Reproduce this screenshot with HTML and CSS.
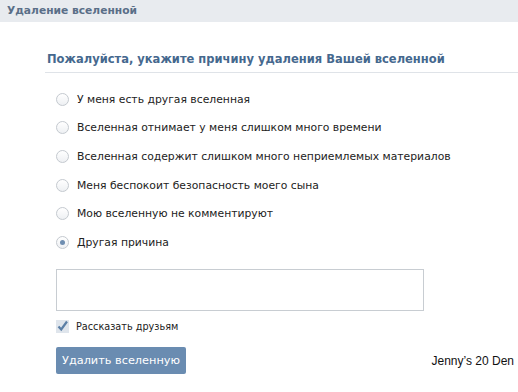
FILE: index.html
```html
<!DOCTYPE html>
<html lang="ru">
<head>
    <meta charset="UTF-8">
    <title>Удаление вселенной</title>
    <link rel="stylesheet" href="styles.css">
</head>
<body>
    <div class="header">Удаление вселенной</div>
    <div class="content">
        <h2 class="title">Пожалуйста, укажите причину удаления Вашей вселенной</h2>
        <div class="reasons">
            <div class="reason"><span class="radio"></span>У меня есть другая вселенная</div>
            <div class="reason"><span class="radio"></span>Вселенная отнимает у меня слишком много времени</div>
            <div class="reason"><span class="radio"></span>Вселенная содержит слишком много неприемлемых материалов</div>
            <div class="reason"><span class="radio"></span>Меня беспокоит безопасность моего сына</div>
            <div class="reason"><span class="radio"></span>Мою вселенную не комментируют</div>
            <div class="reason"><span class="radio on"></span>Другая причина</div>
        </div>
        <div class="other">
            <div class="textbox"></div>
            <div class="share"><span class="check">
                <svg width="13" height="13" viewBox="0 0 13 13"><path d="M2.5 6.5 L5.2 9.5 L11 1.5" fill="none" stroke="#5b7fa6" stroke-width="2.2"/></svg>
            </span>Рассказать друзьям</div>
            <div class="footer">
                <button class="btn">Удалить вселенную</button>
                <span class="sign">Jenny’s 20 Den</span>
            </div>
        </div>
    </div>
</body>
</html>
```

FILE: styles.css
```css
body {
    margin: 0;
    background: #fff;
    font-family: "DejaVu Sans", Tahoma, sans-serif;
    font-size: 10.8px;
    color: #222;
}
.header {
    height: 22px;
    line-height: 22px;
    padding-left: 7px;
    background: #e8ebef;
    color: #5a6f88;
    font-weight: bold;
    font-size: 10.7px;
}
.content {
    padding-left: 45px;
}
.title {
    margin: 30px 0 0 0;
    padding: 0 0 6px 2px;
    font-size: 11.5px;
    font-weight: bold;
    color: #45688e;
    border-bottom: 1px solid #dfe3e8;
}
.reasons {
    padding: 12px 0 0 11px;
}
.reason {
    display: flex;
    align-items: center;
    height: 28.6px;
}
.radio {
    width: 11px;
    height: 11px;
    border: 1px solid #c4c9cf;
    border-radius: 50%;
    background: linear-gradient(#fff, #eef0f3);
    margin-right: 8px;
    position: relative;
}
.radio.on::after {
    content: "";
    position: absolute;
    left: 3px;
    top: 3px;
    width: 5px;
    height: 5px;
    border-radius: 50%;
    background: #6f8eb1;
}
.other {
    padding: 12px 0 0 11px;
}
.textbox {
    width: 366px;
    height: 40px;
    border: 1px solid #c8cdd2;
}
.share {
    display: flex;
    align-items: center;
    margin-top: 9px;
    font-size: 9.7px;
}
.check {
    width: 13px;
    height: 13px;
    margin-right: 7px;
    background: #dfe5ec;
    border: 0;
}
.check svg {
    display: block;
}
.footer {
    display: flex;
    align-items: center;
    justify-content: space-between;
    margin-top: 14px;
    width: 458px;
}
.btn {
    font-family: inherit;
    font-size: 11.3px;
    color: #fff;
    background: #6a8cb1;
    border: none;
    border-radius: 2px;
    height: 27px;
    width: 130px;
    padding: 0;
}
.sign {
    font-family: "Liberation Sans", Arial, sans-serif;
    font-size: 12px;
    color: #111;
    margin-top: 1px;
}
```
